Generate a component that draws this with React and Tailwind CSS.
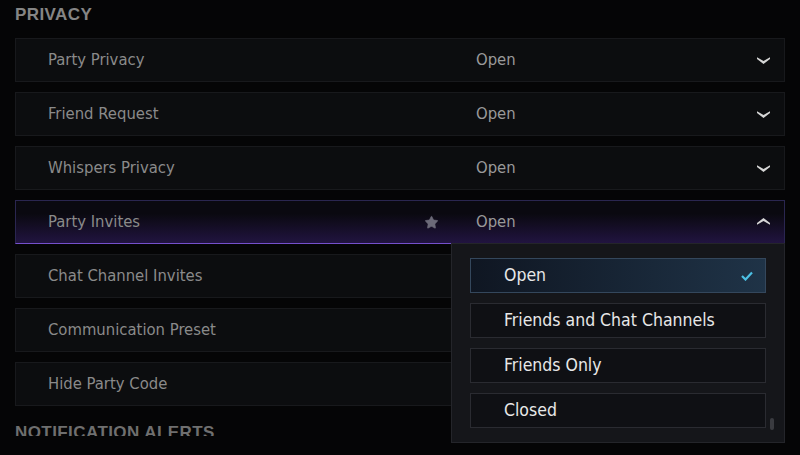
import { Star } from "lucide-react";

const ROWS = [
  { label: "Party Privacy", value: "Open" },
  { label: "Friend Request", value: "Open" },
  { label: "Whispers Privacy", value: "Open" },
  { label: "Party Invites", value: "Open", open: true },
  { label: "Chat Channel Invites" },
  { label: "Communication Preset" },
  { label: "Hide Party Code" },
];

const OPTIONS = ["Open", "Friends and Chat Channels", "Friends Only", "Closed"];

const narrow = { fontFamily: '"Liberation Sans Narrow", "DejaVu Sans Condensed", "Liberation Sans", sans-serif' };

function Chevron({ up }) {
  return (
    <svg width="13" height="8" viewBox="0 0 13 8" className={up ? "rotate-180" : ""}>
      <path d="M0 1.2 L6.5 5 L13 1.2 L13 3 L6.5 8 L0 3 Z" fill="#d6d6d6" />
    </svg>
  );
}

function Row({ row }) {
  const base = "relative grid h-[44px] grid-cols-[460px_1fr] items-center border";
  const look = row.open
    ? "border-[#2a2650] border-b-[#7550cc] bg-[linear-gradient(to_bottom,#0a0910_30%,#211440)]"
    : "border-[#18191c] bg-[#0c0d0f]";
  return (
    <div className={`${base} ${look}`}>
      <div className="flex items-center justify-between pl-[32px] pr-[37px]">
        <span className="text-[16.5px] text-[#8a8a8a]">{row.label}</span>
        {row.open && <Star className="h-[15px] w-[15px] fill-[#6b6a78] text-[#6b6a78]" strokeWidth={1} />}
      </div>
      {row.value && (
        <div className="flex items-center justify-between pr-[14px]">
          <span className="text-[16.5px] text-[#9a9a9a]">{row.value}</span>
          <Chevron up={row.open} />
        </div>
      )}
    </div>
  );
}

export default function App() {
  return (
    <div className="relative h-[455px] w-[800px] overflow-hidden bg-[#050506] px-[15px]" style={narrow}>
      <h2
        className="pt-[4px] text-[17px] font-bold leading-[22px] tracking-wide text-[#858585]"
        style={{ fontFamily: '"Liberation Sans", sans-serif' }}
      >
        PRIVACY
      </h2>
      <div className="mt-[12px] flex flex-col gap-[10px]">
        {ROWS.map((r) => (
          <Row key={r.label} row={r} />
        ))}
      </div>
      <h2
        className="mt-[16px] h-[14px] overflow-hidden text-[17px] font-bold leading-[22px] tracking-wide text-[#6f6f6f]"
        style={{ fontFamily: '"Liberation Sans", sans-serif' }}
      >
        NOTIFICATION ALERTS
      </h2>

      <div className="absolute left-[451px] top-[243px] flex h-[200px] w-[334px] flex-col gap-[10px] border border-[#24252a] bg-[#15161a] px-[18px] pt-[14px]">
        {OPTIONS.map((o, i) => (
          <div
            key={o}
            className={`flex h-[35px] items-center justify-between border pl-[33px] pr-[12px] ${
              i === 0
                ? "border-[#34475c] bg-[linear-gradient(to_right,#0f1622,#1f3347)]"
                : "border-[#2a2b31] bg-[#0f1014]"
            }`}
          >
            <span className="text-[17.5px] text-[#e8e8e8]">{o}</span>
            {i === 0 && (
              <svg width="12" height="10" viewBox="0 0 12 10">
                <path d="M1 5 L4.5 8.5 L11 1.5" fill="none" stroke="#4cc0e4" strokeWidth="2.2" />
              </svg>
            )}
          </div>
        ))}
        <div className="absolute bottom-[12px] right-[10px] h-[12px] w-[4px] rounded-sm bg-[#3a3b40]" />
      </div>
    </div>
  );
}
